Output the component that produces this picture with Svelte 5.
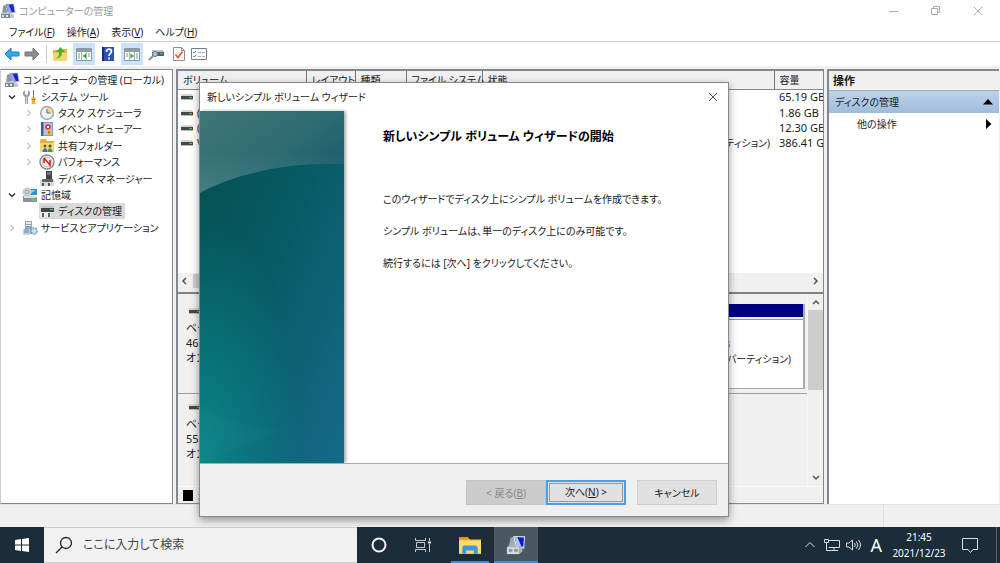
<script lang="ts">
  const menus = [
    { label: 'ファイル', key: 'F' },
    { label: '操作', key: 'A' },
    { label: '表示', key: 'V' },
    { label: 'ヘルプ', key: 'H' }
  ];
  const tree = [
    { label: 'コンピューターの管理 (ローカル)', level: 0, icon: 'computer', arrow: '' },
    { label: 'システム ツール', level: 1, icon: 'tools', arrow: 'open' },
    { label: 'タスク スケジューラ', level: 2, icon: 'clock', arrow: 'closed' },
    { label: 'イベント ビューアー', level: 2, icon: 'event', arrow: 'closed' },
    { label: '共有フォルダー', level: 2, icon: 'shared', arrow: 'closed' },
    { label: 'パフォーマンス', level: 2, icon: 'perf', arrow: 'closed' },
    { label: 'デバイス マネージャー', level: 2, icon: 'device', arrow: '' },
    { label: '記憶域', level: 1, icon: 'storage', arrow: 'open' },
    { label: 'ディスクの管理', level: 2, icon: 'disk', arrow: '', selected: true },
    { label: 'サービスとアプリケーション', level: 1, icon: 'services', arrow: 'closed' }
  ];
  const columns = ['ボリューム', 'レイアウト', '種類', 'ファイル システム', '状態', '容量'];
  const volumes = [
    { name: '', state: '', size: '65.19 GB' },
    { name: '(', state: '', size: '1.86 GB' },
    { name: '(', state: '', size: '12.30 GB' },
    { name: 'V', state: 'パーティション)', size: '386.41 G' }
  ];
</script>

{#snippet drive()}
  <svg class="drive" viewBox="0 0 12 6" aria-hidden="true">
    <path d="M1 0h10l1 2H0z" fill="#d5d5d5" />
    <rect y="2" width="12" height="3" fill="#45484a" />
    <rect x="8" y="3" width="3" height="1" fill="#45c847" />
    <rect y="5" width="12" height="1" fill="#bbb" />
  </svg>
{/snippet}

{#snippet icon(name: string)}
  <svg class="icon" viewBox="0 0 16 16" aria-hidden="true">
    {#if name === 'computer'}
      <path d="M3 3l4-2 1 9-6 2z" fill="#8d969b" />
      <path d="M5 1l9-.5L16 10l-8 1z" fill="#cfd5da" />
      <path d="M5.800 1.700l7.500-.4 1.400 7.700-6.500.8z" fill="#1c22c8" />
      <path d="M5.800 1.700L8.500 1.600 12 9.300l-3.800.5z" fill="#8ea6ee" />
      <path d="M1 10l8-1 5 3v3H1z" fill="#c3c8cb" />
      <path d="M1 11h9v4H1z" fill="#7c878e" />
      <path d="M2 12h2v2H2zM6 12h2v2H6z" fill="#e5eaec" />
    {:else if name === 'tools'}
      <path d="M3 1v4l1.500 1L6 5V1l2 2v3L6 8v7H3V8L1 6V3z" fill="#9ba1a5" />
      <path d="M4 8h1v7H4z" fill="#d8dcde" />
      <path d="M11 1h1v7h-1z" fill="#777" />
      <path d="M9.500 8h4v2l-.5 1 .5 4h-4l.5-4-.5-1z" fill="#f0b32a" />
      <path d="M9.500 10.500h4" stroke="#b57c10" />
    {:else if name === 'clock'}
      <circle cx="8" cy="8" r="7.200" fill="#a7adb2" />
      <circle cx="8" cy="8" r="5.500" fill="#f1f4f6" />
      <path d="M8 8V2.500A5.500 5.500 0 0 1 13.500 8z" fill="#f2d48a" />
      <path d="M8 4v4h3.500" stroke="#4d6b8f" fill="none" />
    {:else if name === 'event'}
      <rect x="2" y="1" width="2" height="14" fill="#3c5a91" />
      <rect x="4" y="1" width="10" height="14" fill="#7f97c2" />
      <rect x="5" y="2" width="8" height="12" fill="#b3c3e0" />
      <circle cx="9" cy="6" r="2.800" fill="#d53838" />
      <path d="M10 8l3.500 6h-7z" fill="#f2c230" />
      <path d="M8 5l2 2M10 5L8 7" stroke="#fff" />
      <path d="M10 10v3" stroke="#5f4a10" />
    {:else if name === 'shared'}
      <path d="M1 3l1-2h5l1 2h7v11H1z" fill="#dfb23d" />
      <path d="M1 5h14v9H1z" fill="#f6d978" />
      <circle cx="6" cy="8" r="1.500" fill="#7b4f26" />
      <circle cx="11" cy="8" r="1.500" fill="#6b4522" />
      <path d="M3.500 14c0-5 5-5 5 0z" fill="#347bbd" />
      <path d="M8.500 14c0-5 5-5 5 0z" fill="#3c9a53" />
    {:else if name === 'perf'}
      <circle cx="8" cy="8" r="7" fill="#fff" stroke="#8b8b8b" stroke-width="1.500" />
      <circle cx="8" cy="8" r="5" fill="#f7eeee" stroke="#c9b5b5" />
      <path d="M5 4v5M5 4l6 7V6" fill="none" stroke="#d42929" stroke-width="1.600" />
    {:else if name === 'device'}
      <path d="M7 0h6v8H7z" fill="#3f4447" />
      <path d="M8 1h4v3H8z" fill="#6d7579" />
      <path d="M1 9h14v6H1z" fill="#d6d9db" />
      <path d="M3 8h11v3H3z" fill="#5e666a" />
      <path d="M3 12h2v3H3zM9 12h2v3H9z" fill="#555" />
    {:else if name === 'storage'}
      <path d="M6 2h9v6H6z" fill="#2f8fc9" />
      <path d="M7 3h7L8 7H7z" fill="#83d1f2" />
      <circle cx="5" cy="5" r="4.500" fill="#c6cccf" />
      <circle cx="5" cy="5" r="1.500" fill="#fff" stroke="#8f979b" />
      <path d="M1 9h13l1 2v4H1z" fill="#8c9498" />
      <path d="M2 9h12v2H2z" fill="#d9dddf" />
      <path d="M10 12h4v2h-4z" fill="#4fd05a" />
    {:else if name === 'disk'}
      <path d="M3 3h11l1 2H2z" fill="#c9c9c9" />
      <path d="M2 5h13v4H2z" fill="#404547" />
      <path d="M11 6h3v1h-3z" fill="#47d050" />
      <path d="M1 9h11v5H1z" fill="#ececec" />
      <path d="M3 10h2v4H3zM9 10h2v4H9z" fill="#596064" />
    {:else if name === 'services'}
      <path d="M3 1h7v13H3z" fill="#93a5b1" />
      <path d="M4 2h5v2H4zM4 5h5v1H4z" fill="#e4ecf0" />
      <path d="M1 9h7v6H1z" fill="#c0d3df" />
      <path d="M2 10h5M2 12h5" stroke="#5f87a2" />
      <circle cx="12" cy="11" r="3" fill="#cde2f2" stroke="#6ba0cc" stroke-width="1.600" stroke-dasharray="2 1" />
    {/if}
  </svg>
{/snippet}

<svelte:head><title>コンピューターの管理</title></svelte:head>

<div class="desktop">
  <div class="window">
    <header class="titlebar">
      {@render icon('computer')}
      <h1>コンピューターの管理</h1>
      <div class="controls">
        <button aria-label="最小化"><svg viewBox="0 0 10 10"><path d="M0 5.500h9" /></svg></button>
        <button aria-label="元に戻す"><svg viewBox="0 0 10 10"><path d="M.5 2.500h6v6h-6zM2.500 2.500v-2h6v6h-2" /></svg></button>
        <button aria-label="閉じる"><svg viewBox="0 0 10 10"><path d="M1 1l8 8M9 1L1 9" /></svg></button>
      </div>
    </header>

    <nav class="menubar">
      {#each menus as m}
        <button>{m.label}(<u>{m.key}</u>)</button>
      {/each}
    </nav>

    <div class="toolbar" role="toolbar" aria-label="ツール バー">
      <button aria-label="戻る">
        <svg viewBox="0 0 16 16"><path d="M1 8l6-6v4h8v4H7v4z" fill="#35a8e6" stroke="#1980c0" /></svg>
      </button>
      <button aria-label="進む">
        <svg viewBox="0 0 16 16"><path d="M15 8L9 2v4H1v4h8v4z" fill="#8b8d8f" stroke="#707274" /></svg>
      </button>
      <span class="sep"></span>
      <button class="wide" aria-label="上へ">
        <svg viewBox="0 0 16 16">
          <path d="M1 4h7l1-1h6v12H1z" fill="#e0b548" /><path d="M1 7h14v8H1z" fill="#f5d67b" />
          <path d="M3 12c4 0 4-3 4-6H4l4.500-5L13 6h-3c0 5-3 7-7 6z" fill="#45b52c" />
        </svg>
      </button>
      <button class="on" aria-label="コンソール ツリーの表示">
        <svg viewBox="0 0 16 16">
          <path d="M.5 2.500h15v12H.5z" fill="#fff" stroke="#8a959d" /><path d="M1 3h14v3H1z" fill="#8d9aa5" />
          <path d="M5.500 6v8M10.500 6v8" stroke="#a3adb4" /><path d="M2 8h2M2 10h2M2 12h2M12 8h2M12 10h2" stroke="#6e8aa3" />
          <path d="M10 7.500v5L6.500 10z" fill="#2eac38" />
        </svg>
      </button>
      <button class="wide" aria-label="ヘルプ">
        <svg viewBox="0 0 16 16">
          <path d="M2 1h12v14H2z" fill="#2b4fb5" /><path d="M2 1h2v14H2z" fill="#17317e" />
          <path d="M6.500 6c0-4 5-3.500 5-.5C11.500 7.500 9 7.500 9 10M9 11.500v2" stroke="#fff" stroke-width="1.700" fill="none" />
        </svg>
      </button>
      <button class="on" aria-label="操作ウィンドウの表示">
        <svg viewBox="0 0 16 16">
          <path d="M.5 2.500h15v12H.5z" fill="#fff" stroke="#8a959d" /><path d="M1 3h14v3H1z" fill="#8d9aa5" />
          <path d="M5.500 6v8M10.500 6v8" stroke="#a3adb4" /><path d="M2 8h2M2 10h2M12 8h2M12 10h2M12 12h2" stroke="#6e8aa3" />
          <path d="M6.500 7.500v5L10 10z" fill="#2eac38" />
        </svg>
      </button>
      <button class="wide" aria-label="再スキャン">
        <svg viewBox="0 0 16 16">
          <path d="M4 4h11l1 2H4z" fill="#bfc3c5" /><path d="M4 6h12v4H4z" fill="#53606a" />
          <path d="M12 7h3v1h-3z" fill="#4cd056" /><circle cx="7" cy="8" r="2.500" fill="#a8cbe0" stroke="#61798a" />
          <path d="M5 10l-4 4" stroke="#9a8c80" stroke-width="2" />
        </svg>
      </button>
      <button aria-label="プロパティ">
        <svg viewBox="0 0 16 16">
          <path d="M2.500 1.500h8l3 3v10h-11z" fill="#fdfdfd" stroke="#8e8e8e" /><path d="M10.500 1.500v3h3" fill="none" stroke="#8e8e8e" />
          <path d="M4.500 8.500l2.500 3 4.500-6" fill="none" stroke="#e0602c" stroke-width="1.800" />
        </svg>
      </button>
      <button aria-label="一覧">
        <svg viewBox="0 0 16 16">
          <path d="M.5 2.500h15v11H.5z" fill="#fff" stroke="#72808b" />
          <path d="M2 6l1 1 2-2M2 10l1 1 2-2" fill="none" stroke="#3d93d6" /><path d="M7 6.500h3M11 6.500h3M7 10.500h3M11 10.500h3" stroke="#a7b0b7" />
        </svg>
      </button>
    </div>

    <main class="panes">
      <ul class="tree">
        {#each tree as n}
          <li class="l{n.level}">
            {#if n.level > 0}
              <span class="twisty">
                {#if n.arrow === 'open'}
                  <svg viewBox="0 0 8 8"><path d="M1 2.500l3 3 3-3" stroke="#333" stroke-width="1.500" fill="none" /></svg>
                {:else if n.arrow === 'closed'}
                  <svg viewBox="0 0 8 8"><path d="M2.500 1l3 3-3 3" stroke="#999" fill="none" /></svg>
                {/if}
              </span>
            {/if}
            <span class="node" class:selected={n.selected}>
              {@render icon(n.icon)}
              <span>{n.label}</span>
            </span>
          </li>
        {/each}
      </ul>

      <section class="center">
        <div class="volumes">
          <table>
            <colgroup><col class="c1" /><col class="c2" /><col class="c3" /><col class="c4" /><col /><col class="c6" /></colgroup>
            <thead>
              <tr>{#each columns as c}<th>{c}</th>{/each}</tr>
            </thead>
            <tbody>
              {#each volumes as v}
                <tr>
                  <td class="vol"><span>{@render drive()}{v.name}</span></td>
                  <td></td><td></td><td></td>
                  <td class="state">{v.state}</td>
                  <td class="size">{v.size}</td>
                </tr>
              {/each}
            </tbody>
          </table>
          <div class="hscroll">
            <svg viewBox="0 0 8 8"><path d="M5 1L2 4l3 3" /></svg>
            <span class="hthumb"></span>
            <svg viewBox="0 0 8 8"><path d="M3 1l3 3-3 3" /></svg>
          </div>
        </div>

        <div class="graph">
          <div class="disks">
            <div class="disk">
              <div class="info">{@render drive()}<span>ベー</span><span>465</span><span>オン</span></div>
              <div class="part">
                <div class="bar"></div>
                <div class="box"><span class="b">B</span><span>復パーティション)</span></div>
              </div>
            </div>
            <div class="disk last">
              <div class="info">{@render drive()}<span>ベー</span><span>55.</span><span>オン</span></div>
            </div>
          </div>
          <div class="vscroll">
            <svg viewBox="0 0 8 8"><path d="M1 6l3-3 3 3" /></svg>
            <span class="vthumb"></span>
            <svg viewBox="0 0 8 8"><path d="M1 2l3 3 3-3" /></svg>
          </div>
        </div>
        <div class="legend"><span class="swatch"></span>未</div>
      </section>

      <aside class="actions">
        <h2>操作</h2>
        <button class="group">ディスクの管理<svg viewBox="0 0 10 6"><path d="M5 0l5 5.500H0z" /></svg></button>
        <button class="more">他の操作<svg viewBox="0 0 6 10"><path d="M0 0l5.500 5L0 10z" /></svg></button>
      </aside>
    </main>
    <footer class="status"><span></span></footer>
  </div>

  <div class="taskbar">
    <button class="start" aria-label="スタート">
      <svg viewBox="0 0 14 14"><path d="M0 2l6-1v5.500H0zM7 1l7-1v6.500H7zM0 7.500h6V13l-6-1zM7 7.500h7V14l-7-1z" fill="#fff" /></svg>
    </button>
    <label class="search">
      <svg viewBox="0 0 18 18"><circle cx="11" cy="7" r="5.500" /><path d="M7 11l-6 6" /></svg>
      <input type="text" placeholder="ここに入力して検索" aria-label="ここに入力して検索" />
    </label>
    <button class="task" aria-label="Cortana">
      <svg viewBox="0 0 18 18"><circle cx="9" cy="9" r="6.500" fill="none" stroke="#f4f4f4" stroke-width="2" /></svg>
    </button>
    <button class="task" aria-label="タスク ビュー">
      <svg viewBox="0 0 18 18"><path d="M1.500 2v2.500h10V2M1.500 16v-2.500h10V16M2.500 6.500h8v5h-8zM15.500 2v3M15.500 8v8" fill="none" stroke="#c5cace" /><path d="M14 5.500h3v2h-3z" fill="#e0e4e6" /></svg>
    </button>
    <button class="task open" aria-label="エクスプローラー">
      <svg class="big" viewBox="0 0 20 18">
        <path d="M0 2h8l2 2h10v13H0z" fill="#f5b92e" /><path d="M0 5h20v12H0z" fill="#ffdb6b" />
        <path d="M0 2h8l1 2H0z" fill="#e5970b" /><path d="M3 17v-6l1.500-1.500h11L17 11v6h-3.500v-3h-7v3z" fill="#3c98db" />
      </svg>
    </button>
    <button class="task active" aria-label="コンピューターの管理">
      <svg class="big" viewBox="0 0 22 22">
        <path d="M5 3l4-1 3 10-7 2-2-1z" fill="#a4abb0" />
        <path d="M8 1l13 .5L20 15l-9-1z" fill="#dfe3e6" />
        <path d="M9.500 2.300l10.300.5L19 13l-7-1z" fill="#1018d2" />
        <path d="M9.500 2.300l3 .2L17 12.700 12 12z" fill="#b4c5f6" />
        <path d="M1 13l4-2 13 3v4l-3 3H1z" fill="#a9b0b5" />
        <path d="M1 13.500h13V21H1z" fill="#d8dcde" />
        <path d="M3 15.500h4v3H3zM9 15.500h4v3H9z" fill="#8a959c" />
      </svg>
    </button>
    <div class="tray">
      <svg class="t1" viewBox="0 0 10 8"><path d="M.5 6L5 1.500 9.500 6" /></svg>
      <svg class="t2" viewBox="0 0 16 14"><path d="M4.500 2.500h11v7h-11M10 10v2.500M6 12.500h8M.5 1.500h4v3h-4zM2.500 5v7.500H6" /></svg>
      <svg class="t3" viewBox="0 0 16 14"><path d="M.5 5v4H3l3.500 3V2L3 5zM8.500 5q1.500 2 0 4M10.500 3.500q2.500 3.500 0 7M12.500 2q4 5 0 10" /></svg>
      <span class="ime">A</span>
      <div class="clock"><time>21:45</time><time>2021/12/23</time></div>
      <svg class="t4" viewBox="0 0 16 16"><path d="M.5 1.500h15v11H11l-2.500 3-2.500-3H.5z" /></svg>
    </div>
  </div>

  <div class="dialog" role="dialog" aria-labelledby="wiz">
    <div class="dtitle">
      <span id="wiz">新しいシンプル ボリューム ウィザード</span>
      <button aria-label="閉じる"><svg viewBox="0 0 10 10"><path d="M1 1l8 8M9 1L1 9" /></svg></button>
    </div>
    <div class="dbody">
      <svg class="banner" viewBox="0 0 144 352" preserveAspectRatio="none" aria-hidden="true">
        <defs>
          <linearGradient id="base" x1="0" y1="0" x2="1" y2="1">
            <stop offset="0" stop-color="#04504f" /><stop offset=".45" stop-color="#075a63" /><stop offset="1" stop-color="#156a8a" />
          </linearGradient>
          <radialGradient id="glow" cx="0" cy="1" r=".7">
            <stop offset="0" stop-color="#0a8e8f" stop-opacity=".85" /><stop offset="1" stop-color="#0a8f90" stop-opacity="0" />
          </radialGradient>
          <linearGradient id="sky" x1="0" y1="0" x2="1" y2=".8">
            <stop offset="0" stop-color="#3f7779" /><stop offset=".6" stop-color="#2d6a72" /><stop offset="1" stop-color="#1a5b69" />
          </linearGradient>
          <linearGradient id="haze" x1="0" y1="0" x2="0" y2="1">
            <stop offset=".5" stop-color="#8fc2c0" stop-opacity="0" /><stop offset="1" stop-color="#8fc2c0" stop-opacity=".2" />
          </linearGradient>
        </defs>
        <rect width="144" height="352" fill="url(#base)" />
        <rect width="144" height="352" fill="url(#glow)" />
        <path d="M0 0h144v53C90 51 35 62 0 82z" fill="url(#sky)" />
        <path d="M0 0h144v53C90 51 35 62 0 82z" fill="url(#haze)" />
        <path d="M0 294c16 12 44 22 80 26L0 352z" fill="#fff" opacity=".02" />
      </svg>
      <div class="content">
        <h2>新しいシンプル ボリューム ウィザードの開始</h2>
        <p>このウィザードでディスク上にシンプル ボリュームを作成できます。</p>
        <p>シンプル ボリュームは、単一のディスク上にのみ可能です。</p>
        <p>続行するには [次へ] をクリックしてください。</p>
      </div>
    </div>
    <div class="dfoot">
      <button disabled>&lt; 戻る(<u>B</u>)</button>
      <button class="default"><span>次へ(<u>N</u>) &gt;</span></button>
      <button class="cancel">キャンセル</button>
    </div>
  </div>
</div>

<style>
  :global(body) { margin: 0; }
  * { box-sizing: border-box; }
  .desktop {
    position: relative;
    display: flex;
    flex-direction: column;
    height: 100vh;
    overflow: hidden;
    background: #f0f0f0;
    color: #1a1a1a;
    font-family: "Noto Sans", "Noto Sans CJK JP", sans-serif;
    font-feature-settings: "palt";
    font-size: 10px;
    line-height: 16px;
    white-space: nowrap;
  }
  button {
    font: inherit;
    font-feature-settings: inherit;
    color: inherit;
    border: 0;
    padding: 0;
    background: none;
    white-space: nowrap;
  }
  svg { display: block; flex: none; }
  h1, h2, p, ul { margin: 0; padding: 0; font-weight: 400; font-size: 10px; }
  .icon { width: 16px; height: 16px; }
  .drive { width: 12px; height: 6px; }

  .window { flex: 1; display: flex; flex-direction: column; min-height: 0; }
  .titlebar { display: flex; align-items: center; height: 22px; background: #fff; gap: 3px; color: #999; }
  .controls { margin-left: auto; display: flex; gap: 12px; padding-right: 7px; }
  .controls button { width: 30px; height: 20px; display: grid; place-items: center; }
  .controls svg { width: 10px; height: 10px; fill: none; stroke: #aaa; }
  .menubar { display: flex; gap: 12px; height: 20px; padding-left: 9px; background: #fff; border-bottom: 1px solid #ccc; }

  .toolbar { display: flex; align-items: center; height: 24px; background: #fff; padding-left: 2px; }
  .toolbar button { width: 20px; height: 22px; display: grid; place-items: center; }
  .toolbar button.wide { width: 26px; }
  .toolbar button.on { width: 22px; background: #cce4f7; }
  .toolbar svg { width: 16px; height: 16px; }
  .sep { width: 1px; height: 18px; background: #ccc; margin: 0 0 0 4px; }

  .panes { flex: 1; min-height: 0; display: grid; grid-template-columns: 173px minmax(0, 1fr) 172px; gap: 3px; padding: 3px 1px 0 0; }
  .panes > * { border: 1px solid #828790; }
  .tree { list-style: none; background: #fff; display: grid; grid-template-rows: repeat(10, 1fr); height: 100%; padding: 2px 0 267px 3px; border-left-color: #ccc; }
  .tree li { display: flex; align-items: center; min-height: 0; }
  .l2 { padding-left: 17px; }
  .twisty { width: 18px; display: flex; padding-left: 4px; }
  .twisty svg { width: 8px; height: 8px; }
  .node { display: flex; align-items: center; gap: 3px; padding-right: 3px; }
  .selected { background: #d9d9d9; }

  .center { display: flex; flex-direction: column; min-width: 0; border-width: 2px 1px 1px 2px !important; overflow: hidden; }
  .volumes { height: 223px; display: flex; flex-direction: column; background: #fff; border-bottom: 2px solid #828282; }
  table { border-collapse: collapse; table-layout: fixed; width: 100%; height: 80px; }
  .c1 { width: 128px; } .c2 { width: 49px; } .c3 { width: 51px; } .c4 { width: 76px; } .c6 { width: 49px; }
  th { height: 18px; padding: 0 0 0 5px; text-align: left; font-weight: 400; background: #f0f0f0; border-right: 1px solid #777; border-bottom: 1px solid #888; line-height: 14px; }
  th:last-child { border-right: 0; }
  td { padding: 0 0 0 5px; line-height: 14px; }
  .vol { padding-left: 3px; }
  .vol span { display: flex; align-items: center; gap: 4px; height: 14px; }
  .state { text-align: right; padding-right: 4px; }
  .size, .disk { font-size: 11px; }
  .hscroll { margin-top: auto; height: 19px; background: #f0f0f0; display: flex; align-items: center; padding: 0 4px 4px 3px; gap: 4px; }
  .hscroll svg, .vscroll svg { width: 8px; height: 8px; fill: none; stroke: #555; stroke-width: 1.500; }
  .hthumb { width: 400px; height: 14px; background: #cdcdcd; margin-right: auto; }
  .graph { flex: 1; display: flex; min-height: 0; }
  .disks { flex: 1; min-width: 0; }
  .disk { display: flex; justify-content: space-between; height: 100px; border-bottom: 1px solid #a0a0a0; padding: 10px 2px 4px 8px; }
  .disk.last { border-bottom: 0; height: 90px; padding-top: 6px; }
  .info { display: flex; flex-direction: column; padding-top: 4px; line-height: 15px; }
  .info .drive { margin: 0 0 6px 3px; }
  .part { width: 300px; border-right: 2px solid #aaa; border-bottom: 2px solid #aaa; font-size: 10px; }
  .bar { height: 13px; background: #000080; }
  .box { display: flex; flex-direction: column; align-items: flex-end; height: 69px; margin-top: 2px; padding: 17px 12px 0 0; border-top: 1px solid #999; background: #fff; line-height: 15px; }
  .box .b { padding-right: 61px; }
  .vscroll { width: 16px; display: flex; flex-direction: column; align-items: center; padding: 4px 0; gap: 4px; border-left: 1px solid #f7f7f7; }
  .vthumb { width: 15px; height: 80px; background: #cdcdcd; margin-bottom: auto; }
  .legend { height: 17px; display: flex; align-items: center; gap: 5px; padding-left: 5px; border-top: 1px solid #fafafa; overflow: hidden; }
  .swatch { width: 10px; height: 11px; background: #000; }

  .actions { background: #fff; border-width: 2px 0 0 2px !important; }
  .actions h2 { height: 20px; padding: 2px 4px; background: #f0f0f0; border-bottom: 1px solid #aaa; font-weight: 700; font-size: 11px; }
  .actions button { display: flex; align-items: center; justify-content: space-between; width: 100%; height: 22px; }
  .group { padding: 0 6px 0 6px !important; background: linear-gradient(#bdd2ea, #9fbcdb) !important; }
  .group svg { width: 10px; height: 6px; }
  .more { padding: 0 7px 0 28px !important; }
  .more svg { width: 6px; height: 10px; }
  .status { height: 23px; display: flex; justify-content: flex-end; border-top: 1px solid #e3e3e3; }
  .status span { width: 117px; border-left: 1px solid #ddd; }

  .taskbar { height: 36px; display: flex; background: #1c2c39; color: #fff; }
  .start { width: 44px; display: grid; place-items: center; }
  .start svg { width: 14px; height: 14px; }
  .search { width: 313px; display: flex; align-items: center; gap: 10px; padding-left: 11px; background: #f1f1f1; border-top: 1px solid #ccc; border-bottom: 1px solid #ccc; }
  .search svg { width: 18px; height: 18px; fill: none; stroke: #222; stroke-width: 1.300; }
  .search input { flex: 1; min-width: 0; border: 0; padding: 0; background: none; font: inherit; font-feature-settings: inherit; font-size: 12px; outline: 0; }
  .search input::placeholder { color: #444; opacity: 1; }
  .task { width: 44px; display: grid; place-items: center; border-bottom: 2px solid transparent; border-top: 2px solid transparent; }
  .task svg { width: 18px; height: 18px; }
  .task svg.big { width: 22px; height: 20px; }
  .task.open { width: 38px; margin: 0 5px 0 6px; border-bottom-color: #4a88c8; }
  .task.active { background: #4a5862; border-bottom-color: #4a88c8; border-top-color: #4a5862; }
  .tray { margin-left: auto; display: flex; align-items: center; padding-right: 18px; border-right: 1px solid #5b6770; margin-right: 3px; }
  .tray svg { fill: none; stroke: #d8dde0; }
  .t1 { width: 10px; height: 8px; margin-right: 9px; }
  .t2 { width: 16px; height: 14px; margin-right: 6px; }
  .t3 { width: 16px; height: 14px; margin-right: 8px; }
  .t4 { width: 16px; height: 16px; }
  .ime { font-size: 18px; }
  .clock { width: 74px; display: flex; flex-direction: column; align-items: center; margin-right: 6px; }

  .dialog { position: absolute; left: 199px; top: 82px; width: 530px; display: flex; flex-direction: column; background: #fff; border: 1px solid #888; box-shadow: 0 3px 8px #0006; }
  .dtitle { display: flex; align-items: center; justify-content: space-between; height: 28px; padding: 0 7px 0 7px; }
  .dtitle svg { width: 10px; height: 10px; margin: 3px; fill: none; stroke: #555; }
  .dbody { display: flex; height: 352px; }
  .banner { width: 144px; height: 352px; box-shadow: 2px 0 3px #0005; }
  .content { padding: 14px 0 0 39px; }
  .content h2 { font-size: 12px; line-height: 24px; font-weight: 700; color: #000; margin-bottom: 42px; }
  .content p { line-height: 16px; margin-bottom: 16px; }
  .dfoot { display: flex; justify-content: flex-end; height: 53px; padding: 16px 11px 12px; background: #f0f0f0; border-top: 1px solid #aaa; }
  .dfoot button { width: 80px; height: 25px; background: #e1e1e1; border: 1px solid #cfcfcf; }
  .dfoot button:disabled { background: #ccc; border-color: #c4c4c4; color: #888; }
  .dfoot .default { border: 2px solid #4aa0e8; padding: 1px; display: grid; }
  .default span { border: 1px solid #999; line-height: 17px; }
  .dfoot .cancel { margin-left: 11px; }
</style>
